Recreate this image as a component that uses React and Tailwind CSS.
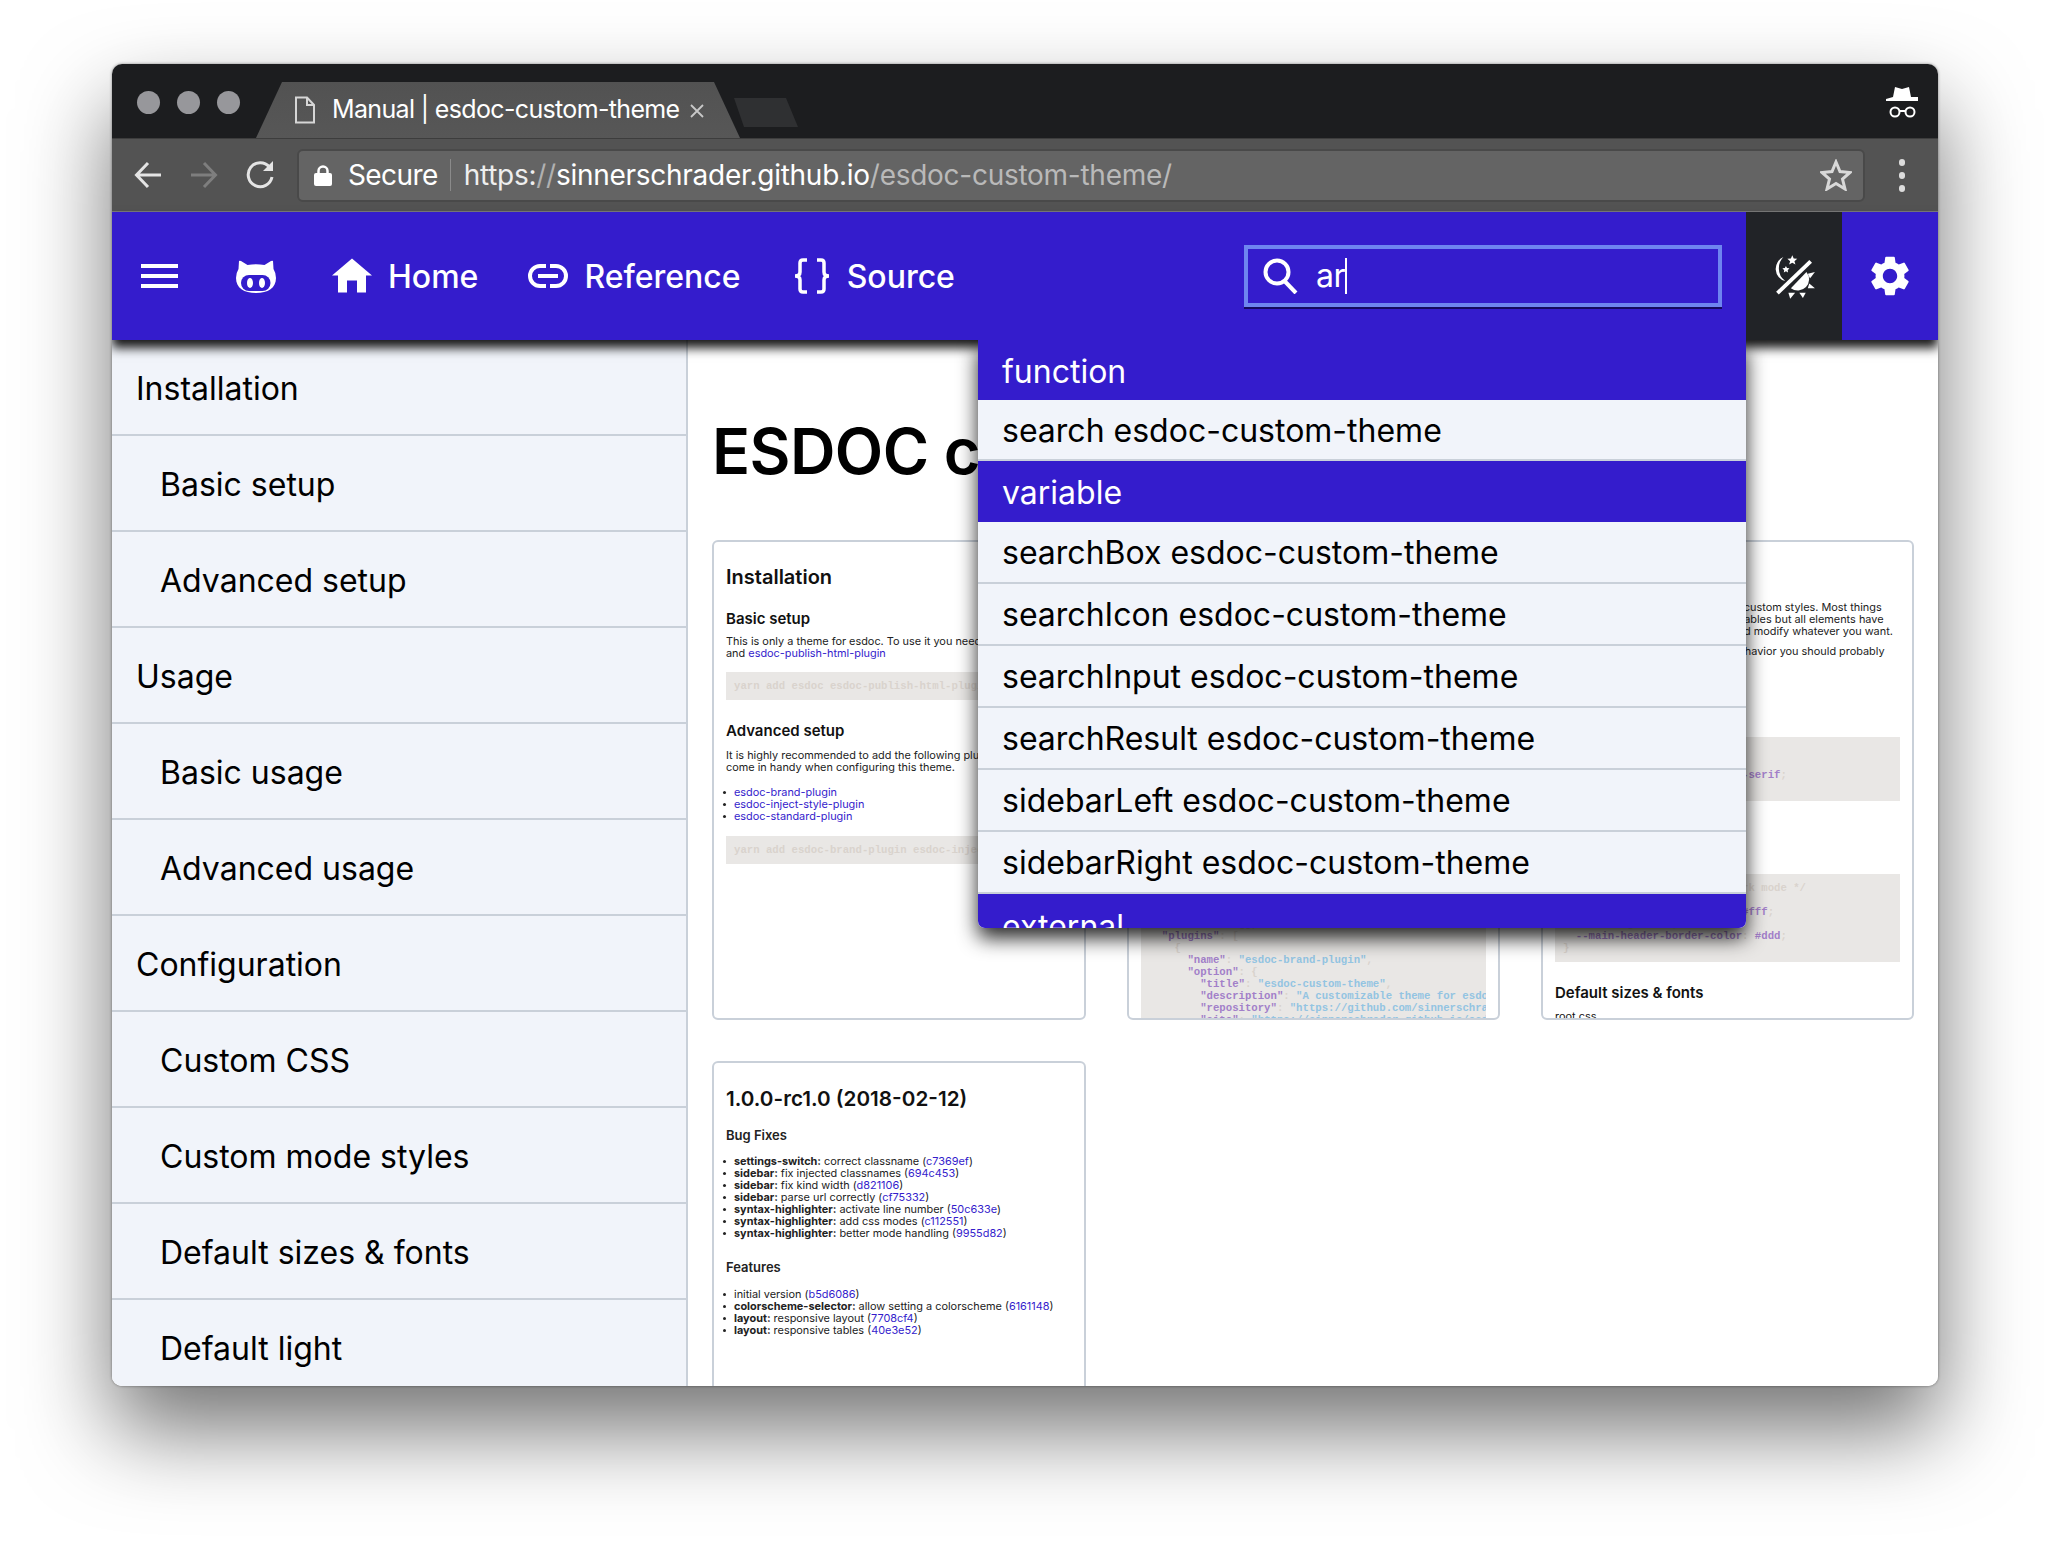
import React from "react";
import { MdSettings } from "react-icons/md";

const sidebar = [
  ["Installation", 0], ["Basic setup", 1], ["Advanced setup", 1], ["Usage", 0], ["Basic usage", 1],
  ["Advanced usage", 1], ["Configuration", 0], ["Custom CSS", 1], ["Custom mode styles", 1],
  ["Default sizes & fonts", 1], ["Default light", 1],
];

const results = [
  ["function", 1, "h-[60px] pt-[3px]"],
  ["search esdoc-custom-theme", 0],
  ["variable", 1, "h-[61px] pt-[2px]"],
  ["searchBox esdoc-custom-theme", 0],
  ["searchIcon esdoc-custom-theme", 0],
  ["searchInput esdoc-custom-theme", 0],
  ["searchResult esdoc-custom-theme", 0],
  ["sidebarLeft esdoc-custom-theme", 0],
  ["sidebarRight esdoc-custom-theme", 0],
  ["external", 1, "h-[62px] pt-[4px]"],
];

const A = ({ children }) => <a className="text-[#341ccc]">{children}</a>;

const H2 = ({ children, className = "" }) => (
  <h2 className={`text-[20px] leading-[24px] font-semibold text-[#111] whitespace-nowrap ${className}`}>{children}</h2>
);
const H3 = ({ children, className = "" }) => (
  <h3 className={`text-[15px] leading-[18px] font-semibold text-[#111] whitespace-nowrap ${className}`}>{children}</h3>
);
const P = ({ children, className = "" }) => (
  <p className={`text-[10.9px] leading-[12px] text-[#222] whitespace-nowrap ${className}`}>{children}</p>
);
const Bullets = ({ items, className = "" }) => (
  <ul className={`text-[10.9px] leading-[12px] text-[#222] whitespace-nowrap ${className}`}>
    {items.map((it, i) => (
      <li key={i} className="flex items-center">
        <span className="w-[3px] h-[3px] -ml-[3px] rounded-full bg-[#222] mr-[8px] shrink-0" />
        <span>{it}</span>
      </li>
    ))}
  </ul>
);
const Code = ({ children, className = "" }) => (
  <pre className={`bg-[#e9e7e5] px-[8px] py-[8px] font-['Liberation_Mono',monospace] font-bold text-[10.67px] leading-[12px] text-[#d9d3cd] overflow-hidden ${className}`}>{children}</pre>
);
const K = ({ children }) => <span className="text-[#a27fc9]">{children}</span>;
const S = ({ children }) => <span className="text-[#93c4e2]">{children}</span>;

const Card = ({ children, className = "" }) => (
  <div className={`h-[480px] border-2 border-[#c9d0d9] rounded-[6px] px-[12px] pt-[24px] overflow-hidden bg-white ${className}`}>{children}</div>
);

function Octocat() {
  return (
    <svg width="40" height="33" viewBox="0 0 40 33" className="shrink-0">
      <path fill="#fff" d="M3 1 Q3.500 .5 5 1 L11.500 5 Q20 3.400 28.500 5 L35 1 Q36.500 .5 37 1 L37.500 9 Q40 13 40 18 C40 28 32 33 20 33 C8 33 0 28 0 18 Q0 13 2.500 9 Z" />
      <rect x="5" y="15" width="29.500" height="16" rx="8" fill="#341ccc" />
      <ellipse cx="14" cy="23" rx="3" ry="5" fill="#fff" />
      <ellipse cx="26" cy="23" rx="3" ry="5" fill="#fff" />
    </svg>
  );
}

function ThemeIcon() {
  return (
    <svg width="50" height="53" viewBox="60 60 140 150" fill="#fff">
      <path d="M103 80 A36 36 0 0 0 108 148 A44 44 0 0 1 90 112 A44 44 0 0 1 103 80 Z" />
      <polygon points="128,75 132,84 142,85 134,92 137,101 128,96 119,101 122,92 114,85 124,84" />
      <polygon points="110,105 113,111 120,112 115,117 116,124 110,120 104,124 105,117 100,112 107,111" />
      <line x1="180" y1="92" x2="86" y2="182" stroke="#fff" strokeWidth="11" />
      <path d="M168 122 A32 32 0 0 1 124 168 Z" />
      <polygon points="172,127 192,122 178,141" />
      <polygon points="176,155 192,168 172,168" />
      <polygon points="148,181 166,181 158,196" />
      <polygon points="117,181 136,181 122,198" />
    </svg>
  );
}

export default function App() {
  return (
    <div className="w-[2050px] h-[1546px] bg-white overflow-hidden pt-[64px] pl-[112px] font-['Inter',sans-serif]">
      <div className="relative w-[1826px] h-[1322px] rounded-[10px] overflow-hidden shadow-[0_44px_88px_rgba(0,0,0,0.55),0_0_3px_rgba(0,0,0,0.45)]">
        {/* tab strip */}
        <div className="h-[74px] bg-[#1c1d1f] flex items-start relative">
          <div className="flex gap-[17px] pl-[25px] pt-[27px]">
            <span className="w-[23px] h-[23px] rounded-full bg-[#97979b]" />
            <span className="w-[23px] h-[23px] rounded-full bg-[#97979b]" />
            <span className="w-[23px] h-[23px] rounded-full bg-[#97979b]" />
          </div>
          <div className="absolute left-[144px] top-[18px] w-[484px] h-[56px] bg-gradient-to-b from-[#525252] to-[#575757] [clip-path:polygon(26px_0,458px_0,484px_100%,0_100%)] flex items-center pl-[38px] pb-[1px]">
            <svg width="22" height="28" viewBox="0 0 22 28" fill="none" stroke="#d6d6d6" strokeWidth="2">
              <path d="M2 1.500 H13 L20 9 V26.500 H2 Z M13 1.500 V9 H20" />
            </svg>
            <span className="ml-[16px] text-[25px] tracking-[-0.65px] text-white whitespace-nowrap">Manual | esdoc-custom-theme</span>
            <svg className="ml-[10px] mt-[2px]" width="14" height="14" viewBox="0 0 14 14" stroke="#c8c8c8" strokeWidth="1.800">
              <path d="M1 1 L13 13 M13 1 L1 13" />
            </svg>
          </div>
          <div className="absolute left-[622px] top-[34px] w-[64px] h-[29px] bg-[#2f3032] [clip-path:polygon(0_0,52px_0,64px_100%,10px_100%)]" />
          <svg className="absolute left-[1774px] top-[23px]" width="32" height="31" viewBox="0 0 32 31" fill="none">
            <path fill="#fff" d="M9 0 L16 2 L23 0 L25 10 H32 L32 14 H0 L0 12 L7 10 Z" />
            <circle cx="9" cy="25" r="4.500" stroke="#fff" strokeWidth="2" />
            <circle cx="24" cy="25" r="4.500" stroke="#fff" strokeWidth="2" />
            <path d="M13.500 24 H19.500" stroke="#fff" strokeWidth="2" />
          </svg>
        </div>

        {/* toolbar */}
        <div className="h-[74px] bg-[#535353] border-t border-[#3d3d3d] border-b border-b-[#7a7a7a] flex items-center pl-[22px] pr-[27px]">
          <svg width="28" height="28" viewBox="0 0 28 28" fill="none" stroke="#e4e4e4" strokeWidth="3">
            <path d="M27 14 H3 M14 2 L2.500 14 L14 26" />
          </svg>
          <svg className="ml-[28px]" width="28" height="28" viewBox="0 0 28 28" fill="none" stroke="#7e7e7e" strokeWidth="3">
            <path d="M1 14 H25 M14 2 L25.500 14 L14 26" />
          </svg>
          <svg className="ml-[28px]" width="28" height="28" viewBox="0 0 28 28" fill="none" stroke="#e4e4e4" strokeWidth="3">
            <path d="M23.500 6 A12 12 0 1 0 26 16" />
            <path fill="#e4e4e4" stroke="none" d="M17 10 H27 V0 Z" />
          </svg>
          <div className="ml-[23px] w-[1568px] h-[53px] bg-[#646464] border-2 border-[#494949] rounded-[6px] flex items-center pl-[15px] pr-[11px]">
            <svg width="18" height="21" viewBox="0 0 18 21">
              <path fill="none" stroke="#fff" strokeWidth="2.500" d="M4.500 9 V6 A4.500 4.500 0 0 1 13.500 6 V9" />
              <rect x="0" y="8" width="18" height="13" rx="2" fill="#fff" />
            </svg>
            <span className="ml-[16px] text-[28px] text-white tracking-[-0.6px] whitespace-nowrap">Secure</span>
            <span className="ml-[12px] w-[1px] h-[32px] bg-[#8a8a8a]" />
            <span className="ml-[13px] text-[28px] text-white tracking-[-0.27px] whitespace-nowrap">
              <span className="text-[#eee]">https:</span><span className="text-[#b0b0b0]">//</span>sinnerschrader.github.io<span className="text-[#b9b9b9]">/esdoc-custom-theme/</span>
            </span>
            <svg className="ml-auto" width="32" height="32" viewBox="0 0 32 32" fill="none" stroke="#d8d8d8" strokeWidth="3">
              <path d="M16 3 L20 12.500 L30 13.500 L22.500 20 L25 30 L16 24.500 L7 30 L9.500 20 L2 13.500 L12 12.500 Z" />
            </svg>
          </div>
          <div className="ml-[34px] flex flex-col gap-[6px]">
            <span className="w-[6px] h-[7px] rounded-full bg-[#dcdcdc]" />
            <span className="w-[6px] h-[7px] rounded-full bg-[#dcdcdc]" />
            <span className="w-[6px] h-[7px] rounded-full bg-[#dcdcdc]" />
          </div>
        </div>

        {/* header */}
        <div className="relative z-20 h-[128px] bg-[#341ccc] flex items-center pl-[29px] shadow-[0_8px_10px_rgba(0,0,0,0.9)] text-white text-[32px] font-medium">
          <div className="w-[37px] flex flex-col gap-[6px] shrink-0">
            <span className="h-[4px] bg-white" />
            <span className="h-[4px] bg-white" />
            <span className="h-[4px] bg-white" />
          </div>
          <div className="ml-[58px]"><Octocat /></div>
          <svg className="ml-[56px] shrink-0 -mt-[2px]" width="40" height="35" viewBox="0 0 40 34" fill="#fff">
            <path d="M20 0 L40 17 H34 V34 H25 V22 H15 V34 H6 V17 H0 Z" />
          </svg>
          <span className="ml-[16px] pt-[2px]">Home</span>
          <svg className="ml-[50px] shrink-0" width="40" height="24" viewBox="0 0 40 24" fill="none" stroke="#fff" strokeWidth="4">
            <path d="M18 2 H12 A10 10 0 0 0 12 22 H18 M22 2 H28 A10 10 0 0 1 28 22 H22 M10 12 H30" />
          </svg>
          <span className="ml-[16px] pt-[2px]">Reference</span>
          <svg className="ml-[53px] shrink-0" width="36" height="36" viewBox="0 0 36 36" fill="none" stroke="#fff" strokeWidth="3.500">
            <path d="M13 2 H9 Q6 2 6 5 V14 Q6 18 1 18 Q6 18 6 22 V31 Q6 34 9 34 H13" />
            <path d="M23 2 H27 Q30 2 30 5 V14 Q30 18 35 18 Q30 18 30 22 V31 Q30 34 27 34 H23" />
          </svg>
          <span className="ml-[17px] pt-[2px]">Source</span>

          <div className="ml-auto mr-[24px] w-[478px] h-[62px] border-[4px] border-[#6e85f0] shadow-[0_2px_0_#150a5e] flex items-center pl-[14px] font-normal">
            <svg width="36" height="36" viewBox="0 0 36 36" fill="none" stroke="#fff" strokeWidth="4">
              <circle cx="15" cy="14" r="11.500" />
              <path d="M22.500 23 L34 35" />
            </svg>
            <span className="ml-[18px] tracking-[-0.5px]">ar</span>
            <span className="w-[2px] h-[36px] bg-white" />
          </div>
          <div className="w-[96px] h-full bg-[#212327] flex items-center justify-center shrink-0"><span className="mr-[3px] flex"><ThemeIcon /></span></div>
          <div className="w-[96px] h-full flex items-center justify-center shrink-0"><MdSettings size={48} color="#fff" /></div>

          {/* search dropdown */}
          <div className="absolute left-[866px] top-full w-[768px] h-[588px] rounded-b-[7px] shadow-[0_10px_20px_rgba(0,0,0,0.85)] [clip-path:inset(0_-50px_-50px_-50px)]">
            <div className="h-full rounded-b-[7px] overflow-hidden bg-[#f1f4fa] text-[32px] font-normal leading-[48px]">
              {results.map(([t, blue, cls], i) =>
                blue ? (
                  <div key={i} className={`${cls} flex items-center px-[24px] bg-[#341ccc] text-white`}>{t}</div>
                ) : (
                  <div key={i} className={`${i === 1 ? "h-[61px]" : "h-[62px]"} pt-[2px] flex items-center px-[24px] border-b-2 border-[#c9d0d9] text-black`}>{t}</div>
                )
              )}
            </div>
          </div>
        </div>

        {/* body */}
        <div className="h-[1046px] flex bg-white">
          <div className="w-[576px] shrink-0 h-full overflow-hidden bg-[#f1f4fa] border-r-2 border-[#c9d0d9] text-[32px] text-black">
            {sidebar.map(([t, sub]) => (
              <div key={t} className={`h-[96px] pt-[3px] ${sub ? "pl-[48px]" : "pl-[24px]"} flex items-center border-b-2 border-[#c9d0d9] whitespace-nowrap`}>{t}</div>
            ))}
          </div>
          <div className="flex-1 min-w-0 pl-[24px] overflow-hidden">
            <h1 className="mt-[80px] mb-[58px] h-[62px] leading-[62px] text-[63px] font-semibold text-black tracking-[-0.6px] whitespace-nowrap">ESDOC custom theme</h1>
            <div className="grid grid-cols-[374px_373px_373px] gap-x-[41px] gap-y-[41px]">
              <Card>
                <H2 className="-mt-[1px]">Installation</H2>
                <H3 className="mt-[21px]">Basic setup</H3>
                <P className="mt-[7px]">This is only a theme for esdoc. To use it you need esdoc<br />and <A>esdoc-publish-html-plugin</A></P>
                <Code className="mt-[13px] h-[28px] py-[7px]">yarn add esdoc esdoc-publish-html-plugin</Code>
                <H3 className="mt-[22px]">Advanced setup</H3>
                <P className="mt-[9px]">It is highly recommended to add the following plugins. They<br />come in handy when configuring this theme.</P>
                <Bullets className="mt-[13px]" items={[<A>esdoc-brand-plugin</A>, <A>esdoc-inject-style-plugin</A>, <A>esdoc-standard-plugin</A>]} />
                <Code className="mt-[14px] h-[28px] py-[7px]">yarn add esdoc-brand-plugin esdoc-inject-style-plugin</Code>
              </Card>
              <Card>
                <H2>Usage</H2>
                <H3 className="mt-[19px]">Basic usage</H3>
                <Code className="mt-[247px] h-[260px]">{`{
  `}<K>"source"</K>{`: `}<S>"./src"</S>{`,
  `}<K>"destination"</K>{`: `}<S>"./docs"</S>{`,
  `}<K>"excludes"</K>{`: [],
  `}<K>"plugins"</K>{`: [
    {
      `}<K>"name"</K>{`: `}<S>"esdoc-brand-plugin"</S>{`,
      `}<K>"option"</K>{`: {
        `}<K>"title"</K>{`: `}<S>"esdoc-custom-theme"</S>{`,
        `}<K>"description"</K>{`: `}<S>"A customizable theme for esdoc"</S>{`,
        `}<K>"repository"</K>{`: `}<S>"https://github.com/sinnerschrader/esdoc"</S>{`,
        `}<K>"site"</K>{`: `}<S>"https://sinnerschrader.github.io/esdoc-custom-theme"</S></Code>
              </Card>
              <Card>
                <H2>Configuration</H2>
                <P className="mt-[11px]">This theme lets you add in your own custom styles. Most things</P>
                <P>are commonly handled with CSS variables but all elements have</P>
                <P>classnames, so you could inspect and modify whatever you want.</P>
                <P className="mt-[8px]">If you actually want to change the behavior you should probably</P>
                <Code className="mt-[80px] h-[64px]">{`/* Change font */
:root {
  --font-family: Inter, sans`}<K>-serif</K>{`;
}`}</Code>
                <Code className="mt-[73px] h-[88px]">{`/* Override variables for dark mode */
:root {
  --main-header-text-color: `}<K>#fff</K>{`;
  --main-bg: #000;
  `}<K>--main-header-border-color</K>{`: `}<K>#ddd</K>{`;
}`}</Code>
                <H3 className="mt-[22px]">Default sizes &amp; fonts</H3>
                <P className="mt-[8px] !text-[#111]">root.css</P>
              </Card>
              <Card className="!h-[400px]">
                <H2 className="!text-[20.7px]">1.0.0-rc1.0 (2018-02-12)</H2>
                <h3 className="mt-[16px] text-[13px] leading-[16px] font-semibold text-[#222]">Bug Fixes</h3>
                <Bullets className="mt-[12px]" items={[
                  <><b>settings-switch:</b> correct classname (<A>c7369ef</A>)</>,
                  <><b>sidebar:</b> fix injected classnames (<A>694c453</A>)</>,
                  <><b>sidebar:</b> fix kind width (<A>d821106</A>)</>,
                  <><b>sidebar:</b> parse url correctly (<A>cf75332</A>)</>,
                  <><b>syntax-highlighter:</b> activate line number (<A>50c633e</A>)</>,
                  <><b>syntax-highlighter:</b> add css modes (<A>c112551</A>)</>,
                  <><b>syntax-highlighter:</b> better mode handling (<A>9955d82</A>)</>,
                ]} />
                <h3 className="mt-[20px] text-[13px] leading-[16px] font-semibold text-[#222]">Features</h3>
                <Bullets className="mt-[13px]" items={[
                  <>initial version (<A>b5d6086</A>)</>,
                  <><b>colorscheme-selector:</b> allow setting a colorscheme (<A>6161148</A>)</>,
                  <><b>layout:</b> responsive layout (<A>7708cf4</A>)</>,
                  <><b>layout:</b> responsive tables (<A>40e3e52</A>)</>,
                ]} />
              </Card>
            </div>
          </div>
        </div>
      </div>
    </div>
  );
}
